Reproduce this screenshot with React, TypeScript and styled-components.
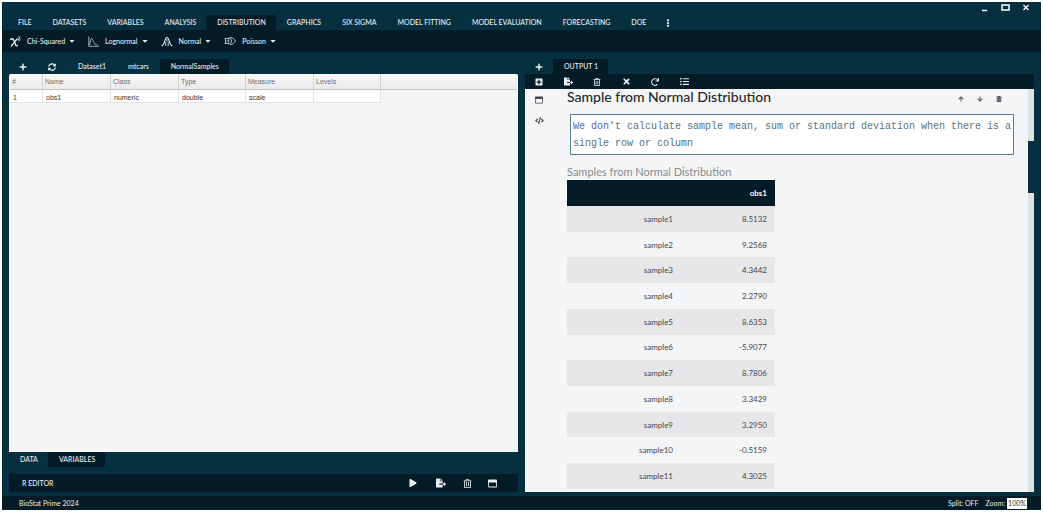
import React from "react";
import styled, { createGlobalStyle, css } from "styled-components";
import {
  FaPlus,
  FaSyncAlt,
  FaFileExport,
  FaRegTrashAlt,
  FaTrashAlt,
  FaTimes,
  FaRedo,
  FaListUl,
  FaPlay,
  FaRegWindowMaximize,
  FaCode,
  FaArrowUp,
  FaArrowDown,
  FaPlusSquare,
  FaEllipsisV,
  FaCaretDown,
} from "react-icons/fa";

const c = {
  base: "#06303f",
  dark: "#031c27",
  text: "#e9eef0",
  paper: "#f4f5f7",
  stripe: "#e7e7e9",
};

const GlobalStyle = createGlobalStyle`
  * { box-sizing: border-box; }
  body { margin: 0; background: #fff; font-family: Lato, "Noto Sans", sans-serif; font-size: 7px; }
  button { font: inherit; color: inherit; background: none; border: 0; padding: 0; margin: 0; cursor: pointer; }
  svg { display: block; }
`;

const Page = styled.div`
  height: 100vh;
  padding: 2px;
`;

const Shell = styled.div`
  display: flex;
  flex-direction: column;
  height: 100%;
  background: ${c.base};
  color: ${c.text};
`;

const TopBar = styled.header`
  position: relative;
  height: 28px;
  flex: none;
  display: flex;
  align-items: flex-end;
`;

const WindowControls = styled.div`
  position: absolute;
  top: 1px;
  right: 11px;
  display: flex;
  gap: 12px;
`;

const Menu = styled.nav`
  display: flex;
  padding-left: 5px;
`;

const Tab = styled.button<{ $active?: boolean; $bottom?: boolean }>`
  height: 15px;
  padding: 0 10px 2px 11px;
  font-weight: 500;
  white-space: nowrap;
  border-radius: ${(p) => (p.$bottom ? "0 0 2px 2px" : "2px 2px 0 0")};
  ${(p) =>
    p.$active &&
    css`
      background: ${c.dark};
    `}
`;

const Ribbon = styled.div`
  flex: none;
  height: 22px;
  display: flex;
  align-items: center;
  gap: 12px;
  padding: 0 8px;
  background: ${c.dark};
`;

const RibbonButton = styled.button`
  display: flex;
  align-items: center;
  gap: 6px;
  font-weight: 500;
  white-space: nowrap;
`;

const RibbonText = styled.span`
  display: flex;
  align-items: center;
  gap: 3px;
`;

const Workspace = styled.main`
  flex: 1;
  min-height: 0;
  display: grid;
  grid-template-columns: minmax(0, 1fr) minmax(0, 1fr);
  gap: 7px;
  padding: 7px 7px 4px;
`;

const Panel = styled.section`
  display: flex;
  flex-direction: column;
  min-height: 0;
`;

const TabStrip = styled.div<{ $gap?: number }>`
  flex: none;
  display: flex;
  height: 15px;
  gap: ${(p) => p.$gap ?? 0}px;
`;

const IconButton = styled.button<{ $w?: number }>`
  flex: none;
  width: ${(p) => p.$w ?? 28}px;
  height: 15px;
  display: flex;
  align-items: center;
  justify-content: center;
`;

const GridArea = styled.div`
  flex: 1;
  min-height: 0;
  background: ${c.paper};
  border: 1px solid #fff;
  border-top: 0;
  border-radius: 2px 2px 0 0;
  overflow: hidden;
`;

const VarTable = styled.table`
  width: 100%;
  table-layout: fixed;
  border-collapse: separate;
  border-spacing: 0;
  font-family: "Liberation Sans", sans-serif;
  text-align: left;
  th {
    height: 16px;
    padding: 0 2px;
    font-weight: 400;
    color: #6a6d70;
    background: linear-gradient(#fafafa, #e9e9ea);
    border-right: 1px solid #cfd1d3;
    border-bottom: 1px solid #c4c6c8;
  }
  td {
    height: 13px;
    padding: 2px 3px 0;
    color: #333;
    background: #fff;
    border-right: 1px solid #e2e3e5;
    border-bottom: 1px solid #e2e3e5;
  }
  th:last-child {
    border-right: 0;
  }
  td:last-child {
    background: none;
    border: 0;
  }
`;

const EditorBar = styled.div`
  flex: none;
  display: flex;
  align-items: center;
  justify-content: space-between;
  height: 18px;
  margin-top: 7px;
  padding: 0 13px;
  background: ${c.dark};
  font-weight: 500;
`;

const Actions = styled.div`
  display: flex;
`;

const OutputToolbar = styled.div`
  flex: none;
  display: flex;
  gap: 1px;
  height: 15px;
  background: ${c.dark};
  border-radius: 0 2px 0 0;
`;

const OutputBody = styled.div`
  flex: 1;
  min-height: 0;
  display: flex;
  background: ${c.paper};
  color: #44484c;
  overflow: hidden;
`;

const SideIcons = styled.div`
  flex: none;
  width: 42px;
  display: flex;
  flex-direction: column;
  gap: 6px;
  padding-top: 3px;
`;

const Report = styled.article`
  flex: 1;
  min-width: 0;
`;

const TitleRow = styled.div`
  display: flex;
  align-items: flex-start;
  justify-content: space-between;
  height: 25px;
  padding-right: 20px;
`;

const Title = styled.h1`
  margin: 0;
  font-size: 14px;
  line-height: 16px;
  font-weight: 500;
  color: #25292d;
  white-space: nowrap;
`;

const TitleActions = styled.div`
  display: flex;
  padding-top: 2px;
`;

const Note = styled.p`
  margin: 0 14px 0 3px;
  padding: 3px 0 2px 2px;
  background: #fff;
  border: 1px solid #56808f;
  font-family: "Liberation Mono", monospace;
  font-size: 10px;
  line-height: 17px;
  color: #56737b;
`;

const Keyword = styled.span`
  color: #5560c0;
`;

const ResultTable = styled.table`
  width: 208px;
  height: 309px;
  border-collapse: collapse;
  font-size: 8px;
  text-align: right;
  caption {
    padding-top: 9px;
    font-size: 11px;
    line-height: 16px;
    text-align: left;
    color: #858a90;
  }
  th,
  td {
    width: 94px;
    padding: 0 8px;
    font-weight: 400;
  }
  th:first-child {
    width: 114px;
  }
  thead th {
    height: 26px;
    background: ${c.dark};
    color: #fff;
    font-weight: 700;
  }
  tbody tr:nth-child(odd) {
    background: ${c.stripe};
  }
`;

const ScrollTrack = styled.div`
  flex: none;
  width: 6px;
  padding-top: 52px;
  background: #e1e2e3;
`;

const ScrollThumb = styled.div`
  height: 52px;
  background: ${c.base};
`;

const StatusBar = styled.footer`
  flex: none;
  display: flex;
  align-items: center;
  height: 14px;
  padding: 0 14px 0 17px;
  background: ${c.dark};
  gap: 7px;
`;

const Product = styled.span`
  flex: 1;
`;

const ZoomLabel = styled.label`
  display: flex;
  align-items: center;
  gap: 2px;
`;

const ZoomInput = styled.input`
  width: 20px;
  height: 11px;
  padding: 0;
  border: 0;
  background: #fff;
  color: #333;
  font: inherit;
  text-align: center;
`;

const ChiIcon = () => (
  <svg width="11" height="11" viewBox="0 0 22 22" fill="none" stroke="currentColor">
    <path d="M1 8C2 5 6 4.500 7.500 8L11 17C12 20.500 14 20.500 15 18" strokeWidth="2.800" />
    <path d="M15 5L2 21" strokeWidth="2.400" />
    <path d="M16 3C17 .5 20.500 1 20 4C19.500 6 17 6.500 16 8H21" strokeWidth="1.800" />
  </svg>
);

const LognormalIcon = () => (
  <svg width="11" height="11" viewBox="0 0 22 22" fill="none" stroke="#b9c4c9" strokeWidth="1.700">
    <path d="M1.500 1V20.500H22" />
    <path d="M3 18C5 14 4.500 5 7 5C10 5 10 17 19 18" />
  </svg>
);

const NormalIcon = () => (
  <svg width="12" height="11" viewBox="0 0 24 22" fill="none" stroke="currentColor" strokeWidth="2.200">
    <path d="M1 19.500C8 19 7 3 12 3C17 3 16 19 23 19.500" />
    <path d="M9.500 12V20M14.500 12V20M12 6V11" strokeWidth="1.700" />
  </svg>
);

const PoissonIcon = () => (
  <svg width="12" height="10" viewBox="0 0 24 20" fill="none" stroke="#c4ced2" strokeWidth="1.800">
    <path d="M1 5H8M1 15H8M5 10H9M3 5V15" />
    <path d="M8 4C13 4 15 7 15 10C15 13 13 16 8 16C10 13 10 7 8 4Z" />
    <path d="M12 3C18 3 21 6 23 10C21 14 18 17 12 17" />
  </svg>
);

const menuItems = [
  "FILE", "DATASETS", "VARIABLES", "ANALYSIS", "DISTRIBUTION", "GRAPHICS",
  "SIX SIGMA", "MODEL FITTING", "MODEL EVALUATION", "FORECASTING", "DOE",
];

const ribbonItems = [
  { label: "Chi-Squared", icon: <ChiIcon /> },
  { label: "Lognormal", icon: <LognormalIcon /> },
  { label: "Normal", icon: <NormalIcon /> },
  { label: "Poisson", icon: <PoissonIcon /> },
];

const samples = [
  "8.5132", "9.2568", "4.3442", "2.2790", "8.6353", "-5.9077",
  "8.7806", "3.3429", "3.2950", "-0.5159", "4.3025",
];

export default function App() {
  return (
    <Page>
      <GlobalStyle />
      <Shell>
        <TopBar>
          <Menu>
            {menuItems.map((m) => (
              <Tab key={m} $active={m === "DISTRIBUTION"}>{m}</Tab>
            ))}
            <IconButton $w={24} aria-label="More"><FaEllipsisV size={8} /></IconButton>
          </Menu>
          <WindowControls>
            <button aria-label="Minimize">
              <svg width="8" height="9" viewBox="0 0 8 9"><path d="M1 7.500H6" stroke="#fff" strokeWidth="1.500" /></svg>
            </button>
            <button aria-label="Maximize">
              <svg width="9" height="9" viewBox="0 0 9 9"><path d="M1 2H8V7H1Z" fill="none" stroke="#fff" strokeWidth="1.500" /></svg>
            </button>
            <button aria-label="Close">
              <svg width="8" height="9" viewBox="0 0 8 9"><path d="M1.500 2L6.500 7M6.500 2L1.500 7" stroke="#fff" strokeWidth="1.300" /></svg>
            </button>
          </WindowControls>
        </TopBar>
        <Ribbon>
          {ribbonItems.map((r) => (
            <RibbonButton key={r.label}>
              {r.icon}
              <RibbonText>
                {r.label}
                <FaCaretDown size={8} />
              </RibbonText>
            </RibbonButton>
          ))}
        </Ribbon>
        <Workspace>
          <Panel>
            <TabStrip $gap={1}>
              <IconButton aria-label="Add dataset"><FaPlus size={8} /></IconButton>
              <IconButton aria-label="Refresh"><FaSyncAlt size={8} /></IconButton>
              <Tab>Dataset1</Tab>
              <Tab>mtcars</Tab>
              <Tab $active>NormalSamples</Tab>
            </TabStrip>
            <GridArea>
              <VarTable>
                <colgroup>
                  <col width={33} />
                  <col width={68} />
                  <col width={68} />
                  <col width={67} />
                  <col width={68} />
                  <col width={67} />
                  <col />
                </colgroup>
                <thead>
                  <tr>
                    <th>#</th><th>Name</th><th>Class</th><th>Type</th><th>Measure</th><th>Levels</th><th />
                  </tr>
                </thead>
                <tbody>
                  <tr>
                    <td>1</td><td>obs1</td><td>numeric</td><td>double</td><td>scale</td><td /><td />
                  </tr>
                </tbody>
              </VarTable>
            </GridArea>
            <TabStrip>
              <Tab $bottom>DATA</Tab>
              <Tab $bottom $active>VARIABLES</Tab>
            </TabStrip>
            <EditorBar>
              <span>R EDITOR</span>
              <Actions>
                <IconButton aria-label="Run"><FaPlay size={8} /></IconButton>
                <IconButton aria-label="Export"><FaFileExport size={10} /></IconButton>
                <IconButton $w={25} aria-label="Clear"><FaRegTrashAlt size={9} /></IconButton>
                <IconButton $w={25} aria-label="Expand"><FaRegWindowMaximize size={9} /></IconButton>
              </Actions>
            </EditorBar>
          </Panel>
          <Panel>
            <TabStrip>
              <IconButton aria-label="Add output"><FaPlus size={8} /></IconButton>
              <Tab $active>OUTPUT 1</Tab>
            </TabStrip>
            <OutputToolbar>
              <IconButton aria-label="New block"><FaPlusSquare size={8} /></IconButton>
              <IconButton aria-label="Export output"><FaFileExport size={9} /></IconButton>
              <IconButton aria-label="Delete output"><FaRegTrashAlt size={8} /></IconButton>
              <IconButton aria-label="Close output"><FaTimes size={9} /></IconButton>
              <IconButton aria-label="Reload output"><FaRedo size={8} /></IconButton>
              <IconButton aria-label="List outputs"><FaListUl size={9} /></IconButton>
            </OutputToolbar>
            <OutputBody>
              <SideIcons>
                <IconButton aria-label="Show window"><FaRegWindowMaximize size={8} /></IconButton>
                <IconButton aria-label="Show code"><FaCode size={9} /></IconButton>
              </SideIcons>
              <Report>
                <TitleRow>
                  <Title>Sample from Normal Distribution</Title>
                  <TitleActions>
                    <IconButton $w={19} aria-label="Move up"><FaArrowUp size={6} /></IconButton>
                    <IconButton $w={19} aria-label="Move down"><FaArrowDown size={6} /></IconButton>
                    <IconButton $w={19} aria-label="Delete"><FaTrashAlt size={6} /></IconButton>
                  </TitleActions>
                </TitleRow>
                <Note>
                  <Keyword>We don</Keyword>'t calculate sample mean, sum or standard deviation when there is a single row or column
                </Note>
                <ResultTable>
                  <caption>Samples from Normal Distribution</caption>
                  <thead>
                    <tr><th /><th>obs1</th></tr>
                  </thead>
                  <tbody>
                    {samples.map((v, i) => (
                      <tr key={i}><th scope="row">sample{i + 1}</th><td>{v}</td></tr>
                    ))}
                  </tbody>
                </ResultTable>
              </Report>
              <ScrollTrack><ScrollThumb /></ScrollTrack>
            </OutputBody>
          </Panel>
        </Workspace>
        <StatusBar>
          <Product>BioStat Prime 2024</Product>
          <span>Split: OFF</span>
          <ZoomLabel>
            Zoom:
            <ZoomInput defaultValue="100%" />
          </ZoomLabel>
        </StatusBar>
      </Shell>
    </Page>
  );
}
